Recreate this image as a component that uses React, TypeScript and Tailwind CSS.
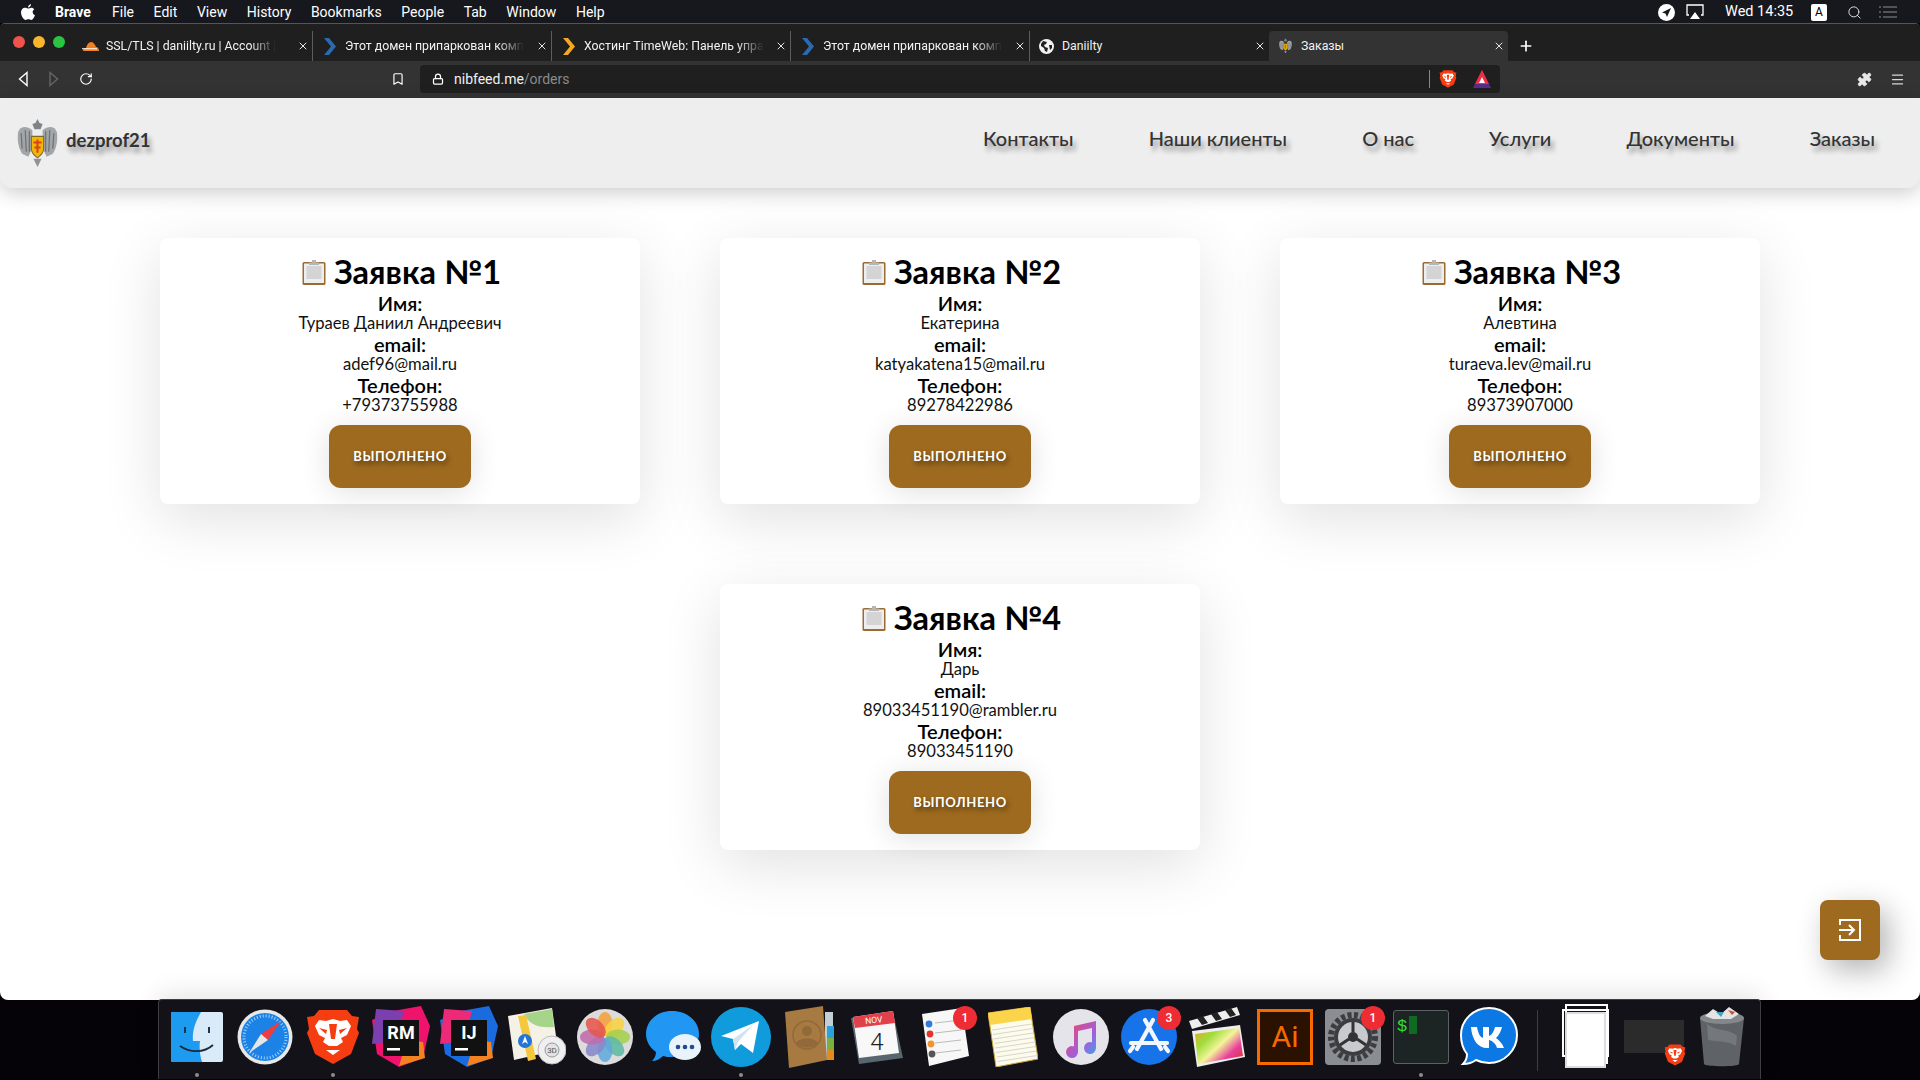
import { ReactNode } from 'react';
import { Lock, Bookmark, RotateCw, Puzzle, Search, Plus, X, Menu } from 'lucide-react';

const sysFont = `font-['Roboto',sans-serif]`;
const pageFont = `font-['Lato','Inter',sans-serif]`;
const navShadow = `[text-shadow:3px_5px_5px_rgba(0,0,0,0.4)]`;

const orders = [
  { n: 1, name: 'Тураев Даниил Андреевич', email: 'adef96@mail.ru', phone: '+79373755988' },
  { n: 2, name: 'Екатерина', email: 'katyakatena15@mail.ru', phone: '89278422986' },
  { n: 3, name: 'Алевтина', email: 'turaeva.lev@mail.ru', phone: '89373907000' },
  { n: 4, name: 'Дарь', email: '89033451190@rambler.ru', phone: '89033451190' },
];

const navItems = ['Контакты', 'Наши клиенты', 'О нас', 'Услуги', 'Документы', 'Заказы'];
const menuItems = ['File', 'Edit', 'View', 'History', 'Bookmarks', 'People', 'Tab', 'Window', 'Help'];

const Emblem = ({ size = 40 }: { size?: number }) => (
  <svg width={size} height={size * 1.22} viewBox="0 0 40 49">
    <path d="M20 1l2 4 3 1-2 5h-6l-2-5 3-1z" fill="#7f8386" />
    <path d="M15 12C9 7 3 8 1 14c-1 7 0 15 4 21l6 3 4-8z" fill="#a3a6a8" />
    <path d="M25 12c6-5 12-4 14 2 1 7 0 15-4 21l-6 3-4-8z" fill="#a3a6a8" />
    <path d="M4 15l1 15M8 12l1 21M12 13l0 20M36 15l-1 15M32 12l-1 21M28 13l0 20" stroke="#6d7174" strokeWidth="1.2" />
    <path d="M14 18h12v12c0 4-3 7-6 9-3-2-6-5-6-9z" fill="#f2b705" stroke="#7d6a20" />
    <path d="M20 21v13M16 24h8M17 29h6" stroke="#d8421b" strokeWidth="2" />
    <path d="M16 40l4 8 4-8z" fill="#8f9395" />
  </svg>
);

const Clipboard = () => (
  <svg width="24" height="26" viewBox="0 0 24 26">
    <rect x="0.500" y="3" width="23" height="23" rx="1.500" fill="#9c6a33" />
    <rect x="2" y="4.500" width="20" height="19.500" fill="#eeeeee" />
    <rect x="4.500" y="7" width="15" height="13" fill="#d4d4d4" />
    <path d="M7 3.500h10V6H7zM10 1h4v3h-4z" fill="#b5b5b5" />
  </svg>
);

const Cloud = () => (
  <svg width="17" height="12" viewBox="0 0 17 12">
    <path d="M1 11c0-2 1-3 3-3 1-4 3-6 5-6s4 2 5 5c2 0 3 2 3 4z" fill="#f38020" />
    <path d="M0 8.200h15v1H0z" fill="#fff" />
  </svg>
);

const Chevron = ({ color }: { color: string }) => (
  <svg width="14" height="17" viewBox="0 0 14 17">
    <path d="M1 0h5l7 8.500L6 17H1l7-8.500z" fill={color} />
  </svg>
);

const GlobeSolid = () => (
  <svg width="15" height="15" viewBox="0 0 15 15">
    <circle cx="7.500" cy="7.500" r="7.500" fill="#f2f2f2" />
    <path d="M4 2l4 1-1 2-2 1 1 2 3 1-1 4-2-1-1-3-3-2 0-2zM10 6l3 0 0 3-2 2z" fill="#1f1f1f" />
  </svg>
);

const BraveMark = ({ size = 56 }: { size?: number }) => (
  <svg width={size} height={size} viewBox="0 0 56 56">
    <path d="M14 1h28l5 6 7 1-2 12 2 4-8 21-18 10-18-10L2 24l2-4L2 8l7-1z" fill="#f63d12" />
    <path d="M28 10l7 2 7-1 4 6-4 9-6 3 2 4-6 4h-8l-6-4 2-4-6-3-4-9 4-6 7 1z" fill="#fff" />
    <path d="M24 15h8l-2 15h-4zM14 19l8 2-1 4zM42 19l-8 2 1 4z" fill="#f63d12" />
    <path d="M21 41h14l-7 5z" fill="#fff" />
  </svg>
);

const JetBrains = ({ label, a, b, c }: { label: string; a: string; b: string; c: string }) => (
  <svg width="60" height="62" viewBox="0 0 60 62">
    <path d="M1 14L22 5 50 0l9 20-7 32-24 9L6 48z" fill={a} />
    <path d="M5 3l28 2-8 30L1 38z" fill={b} />
    <path d="M36 34l16 2 2 16-26 8z" fill={c} />
    <rect x="12" y="14" width="36" height="36" fill="#111" />
    <text x="30" y="33" textAnchor="middle" fill="#fff" fontSize="18" fontWeight="700" fontFamily="Roboto, sans-serif">{label}</text>
    <rect x="16" y="42" width="13" height="2.500" fill="#fff" />
  </svg>
);

const Finder = () => (
  <svg width="52" height="50" viewBox="0 0 52 50">
    <rect width="52" height="50" rx="2" fill="#d9eaf8" />
    <path d="M2 0h28c-5 9-9 18-8 29h7c-1 7 0 14 2 21H2a2 2 0 01-2-2V2a2 2 0 012-2z" fill="#1c9bf0" />
    <path d="M14 15v6M38 15v6" stroke="#1d3550" strokeWidth="2" />
    <path d="M9 34c10 7 24 7 33-1" stroke="#1d2a3a" strokeWidth="1.800" fill="none" />
  </svg>
);

const Safari = () => (
  <svg width="56" height="56" viewBox="0 0 56 56">
    <circle cx="28" cy="28" r="27.500" fill="#e8e8e8" />
    <circle cx="28" cy="28" r="24" fill="#1d82e6" />
    <circle cx="28" cy="28" r="21" fill="none" stroke="#9bd0ff" strokeWidth="3" strokeDasharray="1 2" />
    <path d="M44 12L24 25l7 6z" fill="#f23b3b" />
    <path d="M12 44l12-19 7 6z" fill="#e6e6e6" />
  </svg>
);

const Maps = () => (
  <svg width="58" height="58" viewBox="0 0 58 58">
    <path d="M0 8L44 0l6 42-44 10z" fill="#f4f1e6" />
    <path d="M16 6l28-5 2 18C32 20 22 18 16 6z" fill="#a6d58a" />
    <path d="M10 8l8-1 10 44-8 2z" fill="#f5c73d" />
    <circle cx="17" cy="33" r="7" fill="#2374d8" />
    <path d="M17 28l3 8-3-2-3 2z" fill="#fff" />
    <circle cx="44" cy="42" r="14" fill="#efefef" stroke="#bbb" />
    <circle cx="44" cy="42" r="7" fill="#e2e2e2" stroke="#999" />
    <text x="44" y="45" textAnchor="middle" fontSize="8" fill="#555" fontFamily="Roboto, sans-serif">3D</text>
  </svg>
);

const Photos = () => {
  const colors = ['#f5a03c', '#f7d343', '#a5cf4a', '#5fb9a5', '#62a8dc', '#8a87cb', '#c06bab', '#e6564f'];
  return (
    <svg width="56" height="56" viewBox="0 0 56 56">
      <circle cx="28" cy="28" r="28" fill="#dcdcdc" />
      {colors.map((c, i) => (
        <ellipse key={c} cx="28" cy="15" rx="7.500" ry="12" fill={c} opacity="0.88" transform={`rotate(${i * 45} 28 28)`} />
      ))}
    </svg>
  );
};

const Messages = () => (
  <svg width="56" height="56" viewBox="0 0 56 56">
    <path d="M27 2c15 0 27 10 27 23 0 12-12 23-27 23-3 0-6 0-9-1-3 3-7 5-11 5 2-2 4-5 4-9C5 39 1 32 1 25 1 12 12 2 27 2z" fill="#2196f3" />
    <ellipse cx="40" cy="38" rx="16" ry="13" fill="#e9f3fb" />
    <circle cx="33" cy="38" r="2.300" fill="#234a8c" />
    <circle cx="40" cy="38" r="2.300" fill="#234a8c" />
    <circle cx="47" cy="38" r="2.300" fill="#234a8c" />
  </svg>
);

const Telegram = () => (
  <svg width="60" height="60" viewBox="0 0 60 60">
    <circle cx="30" cy="30" r="30" fill="#0f9bdc" />
    <path d="M10 29L48 14l-6 32-12-9-6 6-2-11z" fill="#fff" />
    <path d="M22 32l20-14-15 17-3 8z" fill="#cfe3f1" />
  </svg>
);

const Contacts = () => (
  <svg width="52" height="62" viewBox="0 0 52 62">
    <rect x="42" y="6" width="8" height="48" fill="#c3cfd6" />
    <rect x="44" y="20" width="7" height="12" fill="#2aa4d8" />
    <rect x="44" y="32" width="7" height="12" fill="#78b13f" />
    <rect x="44" y="44" width="7" height="10" fill="#e58a1d" />
    <path d="M2 6l38-6 4 54-38 8z" fill="#a67a40" />
    <circle cx="24" cy="29" r="14" fill="none" stroke="#92693a" strokeWidth="1.500" />
    <circle cx="24" cy="25" r="5" fill="#92693a" />
    <path d="M13 37c3-6 19-6 22 0-5 6-17 6-22 0z" fill="#92693a" />
  </svg>
);

const Calendar = () => (
  <svg width="52" height="54" viewBox="0 0 52 54">
    <path d="M0 8L42 2l10 46-44 6z" fill="#58666f" />
    <path d="M2 7l40-6 6 42-40 5z" fill="#f8f8f8" />
    <path d="M2 7l40-6 2 12-40 5z" fill="#e2404a" />
    <text x="23" y="13" textAnchor="middle" fontSize="8.500" fill="#fff" transform="rotate(-6 23 13)" fontFamily="Roboto, sans-serif">NOV</text>
    <text x="26" y="40" textAnchor="middle" fontSize="24" fill="#222" fontFamily="Roboto, sans-serif" fontWeight="300">4</text>
  </svg>
);

const Reminders = () => (
  <svg width="50" height="58" viewBox="0 0 50 58">
    <path d="M2 6l40-6 7 48-40 10z" fill="#f7f7f7" />
    {['#2f7be0', '#e0352f', '#f09630', '#555'].map((c, i) => (
      <g key={c}>
        <circle cx={9 + i * 1} cy={16 + i * 10} r="3.400" fill={c} />
        <path d={`M15 ${15 + i * 10}l26 -3`} stroke="#bbb" />
      </g>
    ))}
  </svg>
);

const Notes = () => (
  <svg width="50" height="60" viewBox="0 0 50 60">
    <path d="M0 6L42 0l8 52-42 8z" fill="#fdfbe9" stroke="#c7a43a" />
    <path d="M0 6L42 0l2 12-42 6z" fill="#fbd44a" />
    {[0, 1, 2, 3, 4, 5, 6, 7].map((i) => (
      <path key={i} d={`M${4 + i * 0.8} ${23 + i * 4.5}l40 -6`} stroke="#ccc" strokeWidth="0.800" />
    ))}
  </svg>
);

const Music = () => (
  <svg width="56" height="56" viewBox="0 0 56 56">
    <defs>
      <linearGradient id="musicGrad" x1="0" y1="0" x2="1" y2="1">
        <stop offset="0" stopColor="#f2465e" />
        <stop offset="0.600" stopColor="#a45ddb" />
        <stop offset="1" stopColor="#38a6ea" />
      </linearGradient>
    </defs>
    <circle cx="28" cy="28" r="28" fill="#e4e4ea" />
    <path d="M21 17l22-5v27a6 6 0 11-4-5.600V19l-14 3v21a6 6 0 11-4-5.600z" fill="url(#musicGrad)" />
  </svg>
);

const AppStore = () => (
  <svg width="56" height="56" viewBox="0 0 56 56">
    <circle cx="28" cy="28" r="28" fill="#1773ea" />
    <path d="M32 11L16 40M24 11l16 29M10 34h36M9 42l3-4M47 42l-3-4" stroke="#f2f6fd" strokeWidth="4.200" strokeLinecap="round" fill="none" />
  </svg>
);

const FinalCut = () => (
  <svg width="56" height="60" viewBox="0 0 56 60">
    <defs>
      <linearGradient id="fcpGrad" x1="0" y1="0" x2="1" y2="0.800">
        <stop offset="0" stopColor="#f0a020" />
        <stop offset="0.300" stopColor="#9fdc3c" />
        <stop offset="0.550" stopColor="#f4f49a" />
        <stop offset="0.800" stopColor="#e83e9c" />
        <stop offset="1" stopColor="#d93b3b" />
      </linearGradient>
    </defs>
    <path d="M0 14L48 0l3 8L3 22z" fill="#eee" />
    <path d="M8 11l6-2 5 7-6 2zM22 7l6-2 5 7-6 2zM36 3l6-2 5 7-6 2z" fill="#222" />
    <path d="M3 24l48-6 5 32-48 10z" fill="#eee" />
    <path d="M6 27l44-6 4 28-45 8z" fill="url(#fcpGrad)" />
  </svg>
);

const Illustrator = () => (
  <div className="w-[56px] h-[56px] bg-[#2b1200] border-[3px] border-[#f56b00] flex items-center justify-center text-[#f56b00] text-[30px] font-['Roboto',sans-serif] leading-none">
    Ai
  </div>
);

const SystemPrefs = () => (
  <svg width="56" height="56" viewBox="0 0 56 56">
    <rect width="56" height="56" rx="4" fill="#8a8e92" />
    <circle cx="28" cy="28" r="22" fill="none" stroke="#3b3d40" strokeWidth="6" strokeDasharray="4 2.500" />
    <circle cx="28" cy="28" r="19" fill="#3b3d40" />
    <circle cx="28" cy="28" r="15" fill="#c8cbcd" />
    <circle cx="28" cy="28" r="5" fill="#333" />
    <path d="M28 13v10M15 36l9-6M41 36l-9-6" stroke="#333" strokeWidth="3" />
  </svg>
);

const Terminal = () => (
  <div className="w-[56px] h-[54px] bg-[#1d2424] border border-[#5a6266] rounded-[3px] flex items-start gap-[2px] pl-[3px] pt-[4px]">
    <span className="text-[#2fe02f] text-[17px] leading-[24px] font-['Liberation_Mono',monospace]">$</span>
    <span className="w-[8px] h-[18px] mt-[1px] bg-[#0f6b22]" />
  </div>
);

const VK = () => (
  <svg width="58" height="60" viewBox="0 0 58 60">
    <path d="M29 1c15.500 0 28 12 28 27S44.500 56 29 56c-5 0-9-1-13-3-4 3-8 4-13 4 3-3 4-6 4-10C3 42 1 35 1 28 1 13 13.500 1 29 1z" fill="#0b78e3" stroke="#fff" strokeWidth="2" />
    <path d="M11 20h6c1 6 3 10 6 11V20h6v9c3-1 5-5 6-9h7c-1 5-4 9-6 11 3 2 6 5 8 10h-7c-1-4-4-7-8-8v8h-2c-9 0-15-8-16-21z" fill="#fff" />
  </svg>
);

const DocStack = () => (
  <div className="relative w-[48px] h-[65px]">
    <div className="absolute left-[3px] top-0 w-[43px] h-[60px] border-2 border-white" />
    <div className="absolute left-0 top-[5px] w-[47px] h-[48px] border-2 border-white" />
    <div className="absolute left-[3px] top-[8px] w-[41px] h-[56px] bg-white border-2 border-[#ddd]" />
  </div>
);

const WindowThumb = () => (
  <div className="relative w-[60px] h-[33px] bg-[#2b2b2b]">
    <div className="absolute right-[-2px] top-[24px]">
      <BraveMark size={22} />
    </div>
  </div>
);

const Trash = () => (
  <svg width="46" height="66" viewBox="0 0 46 66">
    <path d="M1 14h44l-5 46c0 3-34 3-35 0z" fill="#5f6266" />
    <path d="M8 20c10 8 22 4 30 12l-1 10c-10-6-20-4-28-6z" fill="#74777b" />
    <ellipse cx="23" cy="14" rx="22" ry="6" fill="#85888b" />
    <path d="M6 12l8-7 8 5 8-7 10 7-8 5H14z" fill="#e4e4e4" />
    <path d="M17 8l5 5 3-5z" fill="#3fa3c4" />
    <path d="M29 6l4 5 3-3z" fill="#c4523f" />
  </svg>
);

const DockCell = ({ dot, badge, children }: { dot?: boolean; badge?: string; children: ReactNode }) => (
  <div className="relative w-[68px] h-full flex items-center justify-center pb-[6px]">
    {children}
    {badge && (
      <span className={`absolute top-[6px] right-[2px] w-[24px] h-[24px] rounded-full bg-[#ee2c34] text-white text-[12px] font-medium flex items-center justify-center ${sysFont}`}>
        {badge}
      </span>
    )}
    {dot && <span className="absolute bottom-[2px] left-[32px] w-[4px] h-[4px] rounded-full bg-[#8d8d8d]" />}
  </div>
);

const Tab = ({ icon, title, active, last, fade }: { icon: ReactNode; title: string; active?: boolean; last?: boolean; fade?: boolean }) => (
  <div className={`relative w-[239px] h-[30px] shrink-0 flex items-center pl-[8px] pr-[3px] ${active ? 'bg-[#333333] rounded-t-[4px]' : ''} ${active || last ? '' : 'border-r border-[#5d5d5d]'}`}>
    <div className="w-[17px] flex justify-center shrink-0">{icon}</div>
    <div className={`ml-[7px] whitespace-nowrap text-[12.300px] text-[#f2f2f2] ${fade ? 'mask-r-from-85%' : ''}`}>{title}</div>
    <X size={12} strokeWidth={2} className="ml-auto text-[#e8e8e8]" />
  </div>
);

const OrderCard = ({ n, name, email, phone }: { n: number; name: string; email: string; phone: string }) => (
  <div className="w-[480px] h-[266px] bg-white rounded-[8px] shadow-[0_15px_60px_rgba(0,0,0,0.12)] flex flex-col items-center pt-[15px] text-black">
    <div className="flex items-center gap-[8px] h-[38px] ml-[3px]">
      <Clipboard />
      <h2 className="text-[32.500px] font-bold leading-[38px]">Заявка №{n}</h2>
    </div>
    <p className="text-[20px] font-semibold leading-[22px] mt-[1px]">Имя:</p>
    <p className="text-[16.600px] text-[#111] leading-[19px]">{name}</p>
    <p className="text-[20px] font-semibold leading-[22px]">email:</p>
    <p className="text-[16.600px] text-[#111] leading-[19px]">{email}</p>
    <p className="text-[20px] font-semibold leading-[22px]">Телефон:</p>
    <p className="text-[16.600px] text-[#111] leading-[19px]">{phone}</p>
    <button className="w-[142px] h-[63px] mt-[10px] rounded-[12px] bg-[#9e6a1f] text-white text-[13px] font-bold tracking-[0.6px] uppercase shadow-[0_4px_30px_rgba(0,0,0,0.12)] [text-shadow:2px_3px_5px_rgba(0,0,0,0.5)]">
      Выполнено
    </button>
  </div>
);

export default function App() {
  return (
    <div className={`w-[1920px] h-[1080px] overflow-hidden bg-[#050307] flex flex-col ${sysFont}`}>
      {/* mac menu bar */}
      <div className="h-[23px] shrink-0 bg-[#16181d] flex items-center justify-between text-white text-[14px] pt-[1px]">
        <div className="flex items-center">
          <svg width="14" height="16" viewBox="0 0 14 16" className="ml-[21px] mr-[20px]">
            <path d="M10 0c0 2-1.500 3.500-3 3.500C7 2 8.500.3 10 0zM7 4.500c1 0 2-.8 3.300-.8 1.200 0 2.300.6 3 1.600-2.500 1.500-2 5 .7 6-.7 2-2.200 4.700-3.700 4.700-1 0-1.500-.7-2.800-.7s-1.800.7-2.800.7C2.700 16 0 11.500 0 8.500 0 5.500 2 3.800 3.900 3.800c1.200 0 2.300.7 3.100.7z" fill="#fff" />
          </svg>
          <span className="font-bold w-[57px]">Brave</span>
          <div className="flex gap-[19.600px]">
            {menuItems.map((m) => (
              <span key={m}>{m}</span>
            ))}
          </div>
        </div>
        <div className="flex items-center pr-[23px]">
          <span className="w-[17px] h-[17px] rounded-full bg-white flex items-center justify-center">
            <svg width="11" height="11" viewBox="0 0 11 11"><path d="M10 1L1 5.500l3.500 1L6 10z" fill="#16181d" /></svg>
          </span>
          <svg width="18" height="17" viewBox="0 0 18 17" className="ml-[11px]">
            <path d="M3 11H1V1h16v10h-2" fill="none" stroke="#fff" strokeWidth="1.300" />
            <path d="M9 8l5 7H4z" fill="#fff" />
          </svg>
          <span className="ml-[21px] w-[69px] whitespace-nowrap text-[14.500px]">Wed 14:35</span>
          <span className="ml-[17px] w-[16px] h-[17px] rounded-[2px] bg-white text-black text-[12px] flex items-center justify-center">A</span>
          <Search size={15} strokeWidth={1.500} className="ml-[20px] text-[#e5e5e5]" />
          <svg width="18" height="14" viewBox="0 0 18 14" className="ml-[17px]">
            <path d="M0 2h2M4 2h14M0 7h2M4 7h14M0 12h2M4 12h14" stroke="#8e8e8e" strokeWidth="1.200" />
          </svg>
        </div>
      </div>

      {/* browser window */}
      <div className="flex-1 flex flex-col min-h-0 rounded-t-[5px] overflow-hidden border-t border-[#555]">
        <div className="h-[37px] shrink-0 bg-[#1f1f1f] flex items-end">
          <div className="w-[74px] h-full flex items-center gap-[8px] pl-[13px] pb-[2px]">
            <span className="w-[12px] h-[12px] rounded-full bg-[#f0534c]" />
            <span className="w-[12px] h-[12px] rounded-full bg-[#f8b52e]" />
            <span className="w-[12px] h-[12px] rounded-full bg-[#29c441]" />
          </div>
          <Tab icon={<Cloud />} title="SSL/TLS | daniilty.ru | Account |" fade />
          <Tab icon={<Chevron color="#2a6bb0" />} title="Этот домен припаркован комп" fade />
          <Tab icon={<Chevron color="#f5a81c" />} title="Хостинг TimeWeb: Панель упра" fade />
          <Tab icon={<Chevron color="#2a6bb0" />} title="Этот домен припаркован комп" fade />
          <Tab icon={<GlobeSolid />} title="Daniilty" last />
          <Tab icon={<Emblem size={13} />} title="Заказы" active />
          <Plus size={16} strokeWidth={2.500} className="ml-[10px] mb-[7px] text-white" />
        </div>

        <div className="h-[37px] shrink-0 bg-[#333333] flex items-center pb-[1px]">
          <svg width="10" height="16" viewBox="0 0 10 16" className="ml-[18px]">
            <path d="M9 1.500L1.500 8 9 14.500z" fill="none" stroke="#fff" strokeWidth="1.400" />
          </svg>
          <svg width="10" height="16" viewBox="0 0 10 16" className="ml-[21px]">
            <path d="M1 1.500L8.500 8 1 14.500z" fill="none" stroke="#666" strokeWidth="1.400" />
          </svg>
          <RotateCw size={14} strokeWidth={2} className="ml-[20px] text-white" />
          <Bookmark size={14} strokeWidth={2} className="ml-[298px] text-white" />
          <div className="ml-[15px] w-[1080px] h-[28px] rounded-[4px] bg-[#1f1f1f] flex items-center text-[14px]">
            <Lock size={12} strokeWidth={2.500} className="ml-[12px] text-white" />
            <span className="ml-[10px] text-[#f0f0f0]">nibfeed.me</span>
            <span className="text-[#8a8a8a]">/orders</span>
            <div className="ml-auto h-[18px] border-l border-[#888]" />
            <div className="ml-[9px]">
              <BraveMark size={18} />
            </div>
            <svg width="18" height="18" viewBox="0 0 18 18" className="ml-[16px] mr-[9px]">
              <path d="M9 0l9 18H0z" fill="#5b2a8c" />
              <path d="M9 0l7 14H2z" fill="#ef2d3d" />
              <path d="M9 7l3 6H6z" fill="#fff" />
            </svg>
          </div>
          <Puzzle size={15} fill="#e8e8e8" strokeWidth={1.500} className="ml-auto text-[#e8e8e8]" />
          <Menu size={15} strokeWidth={2} className="ml-[18px] mr-[15px] text-[#d8d8d8]" />
        </div>

        {/* page */}
        <div className={`relative flex-1 min-h-0 bg-white rounded-b-[8px] ${pageFont}`}>
          <header className="h-[90px] bg-[#eeeeee] rounded-b-[12px] shadow-[0_5px_20px_rgba(0,0,0,0.2)] flex items-center justify-between pl-[17px] pr-[45px]">
            <div className="flex items-center gap-[8px]">
              <Emblem size={41} />
              <span className={`text-[18.500px] font-bold text-[#333] mb-[4px] ${navShadow}`}>dezprof21</span>
            </div>
            <nav className="flex gap-[75px] mb-[10px]">
              {navItems.map((item) => (
                <a key={item} className={`text-[20px] font-medium text-[#333] whitespace-nowrap ${navShadow}`}>
                  {item}
                </a>
              ))}
            </nav>
          </header>

          <div className="flex flex-wrap justify-center gap-x-[80px] gap-y-[80px] pt-[50px] px-[160px]">
            {orders.map((o) => (
              <OrderCard key={o.n} {...o} />
            ))}
          </div>

          <button className="absolute right-[40px] bottom-[40px] w-[60px] h-[60px] rounded-[8px] bg-[#9e6a1f] flex items-center justify-center shadow-[8px_10px_30px_rgba(0,0,0,0.3)]">
            <svg width="24" height="24" viewBox="0 0 24 24" fill="none" stroke="#fff" strokeWidth="2">
              <path d="M2 7V2h20v20H2v-5M1 12h15M11 7l5 5-5 5" />
            </svg>
          </button>
        </div>

        {/* dock */}
        <div className="relative h-[80px] shrink-0 flex justify-start">
          <div className="ml-[158px] w-[1603px] h-full -mt-[1px] bg-[#121218] border-t border-x border-[#3d3d42] rounded-t-[4px] shadow-[0_-6px_24px_rgba(0,0,0,0.1)] flex pl-[4px]">
            <DockCell dot><Finder /></DockCell>
            <DockCell><Safari /></DockCell>
            <DockCell dot><BraveMark size={56} /></DockCell>
            <DockCell><JetBrains label="RM" a="#f0136e" b="#7b3fb0" c="#f58220" /></DockCell>
            <DockCell><JetBrains label="IJ" a="#1b6be0" b="#ec2a78" c="#f58220" /></DockCell>
            <DockCell><Maps /></DockCell>
            <DockCell><Photos /></DockCell>
            <DockCell><Messages /></DockCell>
            <DockCell dot><Telegram /></DockCell>
            <DockCell><Contacts /></DockCell>
            <DockCell><Calendar /></DockCell>
            <DockCell badge="1"><Reminders /></DockCell>
            <DockCell><Notes /></DockCell>
            <DockCell><Music /></DockCell>
            <DockCell badge="3"><AppStore /></DockCell>
            <DockCell><FinalCut /></DockCell>
            <DockCell><Illustrator /></DockCell>
            <DockCell badge="1"><SystemPrefs /></DockCell>
            <DockCell dot><Terminal /></DockCell>
            <DockCell><VK /></DockCell>
            <div className="w-[29px] flex justify-center pt-[10px] pb-[8px]">
              <div className="w-px h-full bg-[#3d3d42]" />
            </div>
            <DockCell><DocStack /></DockCell>
            <DockCell><WindowThumb /></DockCell>
            <DockCell><Trash /></DockCell>
          </div>
        </div>
      </div>
    </div>
  );
}
